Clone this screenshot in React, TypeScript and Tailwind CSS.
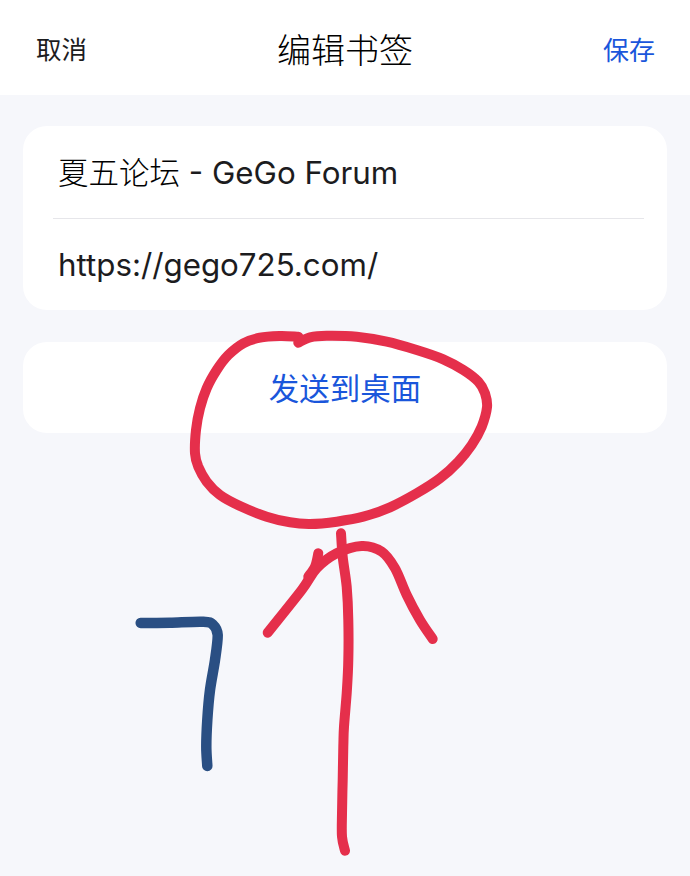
const FONT = "font-['Inter','Noto_Sans_CJK_SC',sans-serif]";

// points read off the reference at 3x, so divide down and add the crop origin
function smooth(points: number[][], ox: number, oy: number) {
  const p = points.map(([x, y]) => [ox + x / 3, oy + y / 3]);
  let d = `M${p[0][0].toFixed(1)} ${p[0][1].toFixed(1)}`;
  for (let i = 0; i < p.length - 1; i++) {
    const a = p[Math.max(i - 1, 0)];
    const b = p[i];
    const c = p[i + 1];
    const e = p[Math.min(i + 2, p.length - 1)];
    const c1 = [b[0] + (c[0] - a[0]) / 6, b[1] + (c[1] - a[1]) / 6];
    const c2 = [c[0] - (e[0] - b[0]) / 6, c[1] - (e[1] - b[1]) / 6];
    d += ` C${c1[0].toFixed(1)} ${c1[1].toFixed(1)} ${c2[0].toFixed(1)} ${c2[1].toFixed(1)} ${c[0].toFixed(1)} ${c[1].toFixed(1)}`;
  }
  return d;
}

const CIRCLE = [
  [385, 50], [330, 48], [270, 53], [220, 70], [175, 105], [140, 150], [110, 205], [90, 265], [78, 330], [75, 400],
  [85, 440], [110, 485], [150, 525], [210, 558], [290, 590], [360, 607], [420, 612], [500, 605], [580, 590],
  [660, 562], [740, 520], [810, 475], [865, 425], [905, 375], [935, 320], [951, 262], [945, 220], [925, 185],
  [880, 150], [820, 118], [740, 90], [650, 65], [560, 50], [470, 47], [420, 52], [385, 68],
];
const SHAFT = [
  [663, 40], [668, 110], [680, 200], [685, 300], [685, 420], [680, 520], [672, 620], [670, 680], [668, 780],
  [666, 880], [666, 950], [675, 992],
];
const ARMS = [
  [443, 338], [545, 210], [590, 145], [650, 100], [725, 78], [785, 95], [825, 145], [860, 225], [900, 300], [938, 357],
];
const NUB = [[595, 100], [585, 140], [565, 170]];
const SEVEN = [
  [62, 309], [150, 308], [250, 305], [280, 315], [293, 345], [285, 420], [270, 510], [262, 600], [259, 680], [262, 738],
];

function Scribbles() {
  return (
    <svg
      className="absolute inset-0 pointer-events-none"
      width="690"
      height="876"
      viewBox="0 0 690 876"
      fill="none"
      strokeLinecap="round"
      strokeLinejoin="round"
      strokeWidth="10"
    >
      <path d={smooth(CIRCLE, 170, 320)} stroke="#e52f4b" />
      <path d={smooth(SHAFT, 120, 520)} stroke="#e52f4b" />
      <path d={smooth(ARMS, 120, 520)} stroke="#e52f4b" />
      <path d={smooth(NUB, 120, 520)} stroke="#e52f4b" />
      <path d={smooth(SEVEN, 120, 520)} stroke="#2a4f83" strokeWidth="10.5" />
    </svg>
  );
}

export default function App() {
  return (
    <div className={`relative h-[876px] w-[690px] overflow-hidden bg-[#f6f7fb] ${FONT}`}>
      <header className="flex h-[95px] items-center justify-between bg-white pl-9 pr-[35px] pt-[5px]">
        <span className="text-[25.5px] text-[#1c1c1e]">取消</span>
        <span className="text-[34px] font-light text-black">编辑书签</span>
        <span className="text-[26px] text-[#1a56db]">保存</span>
      </header>

      <div className="mx-[23px] mt-[31px] flex h-[184px] flex-col rounded-[24px] bg-white">
        <div className="flex h-[92px] items-center pl-[35px] pt-[2px] text-[31.3px] text-[#1c1c1e] whitespace-pre">
          <span className="text-[30.5px] font-light text-black">夏五论坛</span> - GeGo Forum
        </div>
        <div className="ml-[30px] mr-[23px] h-px bg-[#e6e6ea]" />
        <div className="flex h-[91px] items-center pl-[35px] pt-[2px] text-[31.3px] text-[#1c1c1e]">
          https://gego725.com/
        </div>
      </div>

      <div className="mx-[23px] mt-[32px] flex h-[91px] items-center justify-center rounded-[24px] bg-white pt-[2px] text-[30.5px] text-[#1a56db]">
        发送到桌面
      </div>

      <Scribbles />
    </div>
  );
}
